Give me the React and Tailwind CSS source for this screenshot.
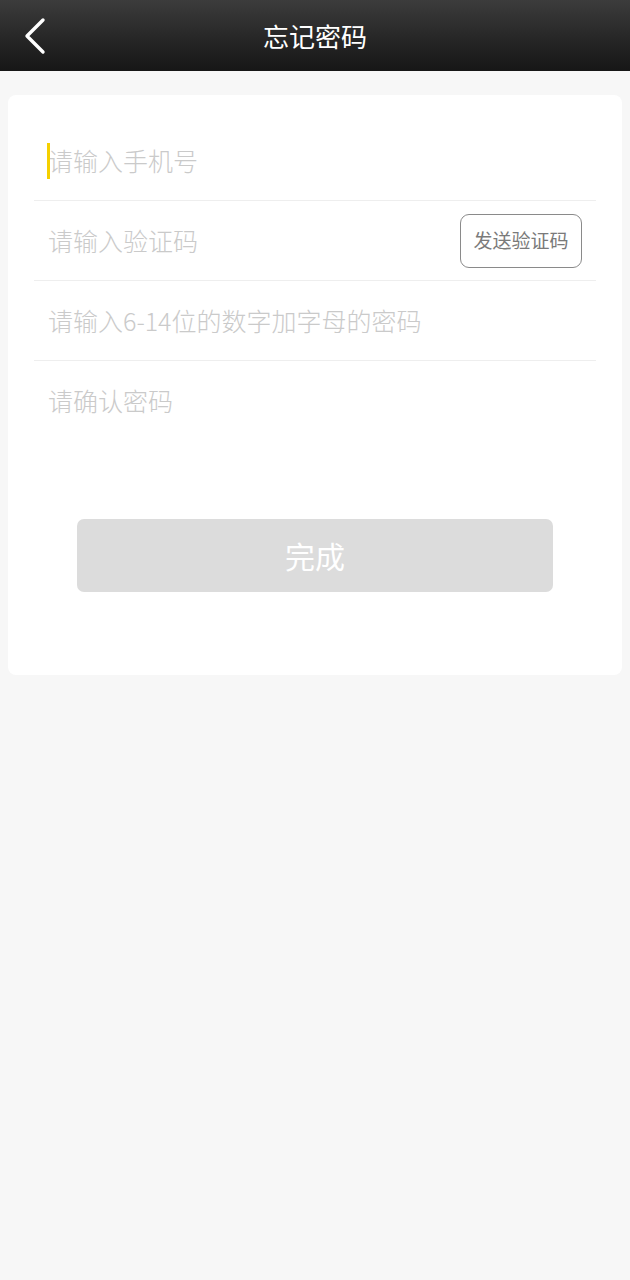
export default function App() {
  const font = { fontFamily: '"Noto Sans CJK SC", "Noto Sans", sans-serif' };
  return (
    <div className="min-h-[1280px] bg-[#f7f7f7]" style={font}>
      <header className="relative flex h-[71px] items-center justify-center bg-gradient-to-b from-[#3c3c3c] to-[#161616]">
        <button className="absolute left-[20px] top-[16px] flex h-[40px] w-[30px] items-center justify-center">
          <svg width="26" height="38" viewBox="0 0 26 38" fill="none">
            <polyline points="21,3 5,19 21,35" stroke="#fff" strokeWidth="3.4" strokeLinecap="round" strokeLinejoin="round" />
          </svg>
        </button>
        <h1 className="text-[26px] leading-none text-white">忘记密码</h1>
      </header>

      <main className="px-[8px] pt-[24px]">
        <div className="rounded-[8px] bg-white px-[26px] pt-[26px] pb-[83px]">
          <div className="relative flex h-[80px] items-center border-b border-[#eeeeee] pl-[14px]">
            <span className="absolute left-[13px] top-[22px] h-[36px] w-[3px] bg-[#f5d000]" />
            <span className="text-[25px] font-light text-[#cacaca]">请输入手机号</span>
          </div>
          <div className="flex h-[80px] items-center justify-between border-b border-[#eeeeee] pl-[14px] pr-[14px]">
            <span className="text-[25px] font-light text-[#cacaca]">请输入验证码</span>
            <button className="flex h-[54px] w-[122px] items-center justify-center rounded-[9px] border-[1.5px] border-[#8a8a8a] text-[19px] text-[#7a7a7a]">
              发送验证码
            </button>
          </div>
          <div className="flex h-[80px] items-center border-b border-[#eeeeee] pl-[14px]">
            <span className="text-[25px] font-light text-[#cacaca]">请输入6-14位的数字加字母的密码</span>
          </div>
          <div className="flex h-[80px] items-center pl-[14px]">
            <span className="text-[25px] font-light text-[#cacaca]">请确认密码</span>
          </div>

          <div className="mt-[78px] px-[43px]">
            <button className="flex h-[73px] w-full items-center justify-center rounded-[7px] bg-[#dcdcdc] text-[30px] text-white">
              完成
            </button>
          </div>
        </div>
      </main>
    </div>
  );
}
